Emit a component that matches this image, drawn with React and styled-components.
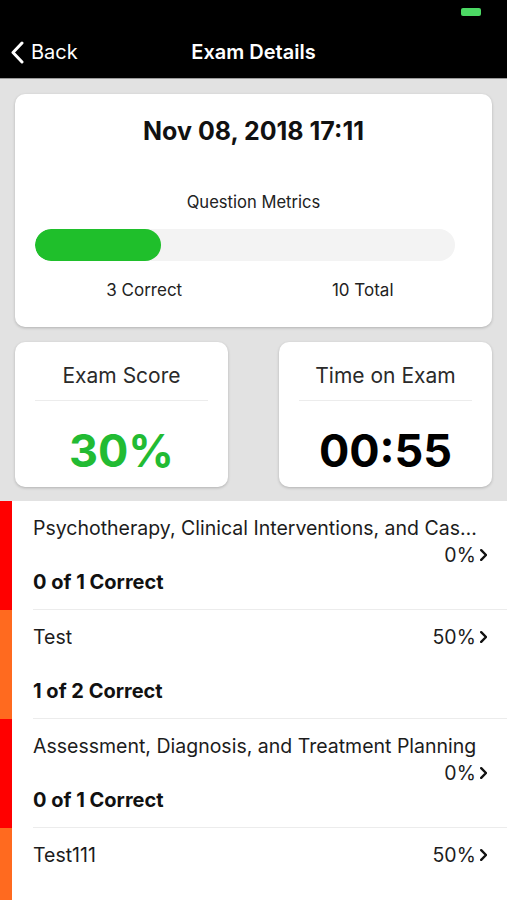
import React from 'react';
import styled, { createGlobalStyle } from 'styled-components';

const GlobalStyle = createGlobalStyle`
  body {
    margin: 0;
    background: #e2e2e2;
    font-family: Inter, "Liberation Sans", Arial, sans-serif;
    color: #1c1c1c;
  }
`;

const Screen = styled.div`
  width: 507px;
  height: 900px;
  overflow: hidden;
  background: #e2e2e2;
`;

const Header = styled.header`
  height: 78px;
  background: #000;
  border-bottom: 1px solid #9a9a9a;
  display: flex;
  flex-direction: column;
`;

const StatusBar = styled.div`
  height: 26px;
  display: flex;
  justify-content: flex-end;
  align-items: flex-start;
  padding: 8px 26px 0 0;
  box-sizing: border-box;
`;

const Battery = styled.div`
  width: 20px;
  height: 8px;
  border-radius: 2px;
  background: #4cd964;
`;

const NavBar = styled.div`
  flex: 1;
  display: grid;
  grid-template-columns: 1fr auto 1fr;
  align-items: center;
  padding: 0 10px 0;
`;

const BackButton = styled.div`
  display: flex;
  align-items: center;
  gap: 7px;
  color: #fff;
  font-size: 20px;
`;

const NavTitle = styled.div`
  color: #fff;
  font-size: 20px;
  font-weight: 600;
`;

const Content = styled.main`
  padding: 15px 15px 14px;
  display: flex;
  flex-direction: column;
  gap: 15px;
`;

const Card = styled.div`
  background: #fff;
  border-radius: 10px;
  box-shadow: 0 1px 3px rgba(0, 0, 0, 0.22);
`;

const MetricsCard = styled(Card)`
  padding: 22px 20px 27px;
  text-align: center;
`;

const DateTitle = styled.div`
  font-size: 25px;
  line-height: 30px;
  font-weight: 700;
  color: #111;
`;

const Caption = styled.div`
  margin-top: 46px;
  font-size: 16.6px;
  line-height: 20px;
  color: #222;
`;

const Track = styled.div`
  margin: 17px 17px 0 0;
  height: 32px;
  border-radius: 16px;
  background: #f3f3f3;
  overflow: hidden;
`;

const Fill = styled.div`
  height: 100%;
  border-radius: 16px;
  background: #1fbf2b;
`;

const Labels = styled.div`
  margin-top: 19px;
  display: grid;
  grid-template-columns: 1fr 1fr;
  font-size: 17px;
  line-height: 20px;
  color: #222;
`;

const StatRow = styled.div`
  display: grid;
  grid-template-columns: 213px 213px;
  justify-content: space-between;
`;

const StatCard = styled(Card)`
  padding: 22px 20px 10px;
  text-align: center;
`;

const StatLabel = styled.div`
  font-size: 21px;
  line-height: 24px;
  color: #2a2a2a;
  padding-bottom: 12px;
  border-bottom: 1px solid #ececec;
`;

const StatValue = styled.div`
  margin-top: 24px;
  font-size: 45px;
  line-height: 52px;
  font-weight: 700;
  color: ${p => p.color || '#000'};
`;

const List = styled.ul`
  list-style: none;
  margin: 0;
  padding: 0;
  background: #fff;
`;

const Row = styled.li`
  display: flex;
  background: #fff;
`;

const Strip = styled.div`
  width: 12px;
  flex-shrink: 0;
  background: ${p => p.color};
`;

const RowBody = styled.div`
  flex: 1;
  min-width: 0;
  margin-left: 21px;
  padding: 13.5px 20px 13.5px 0;
  border-bottom: 1px solid #ececec;
  font-size: 19.5px;
  line-height: 27px;
`;

const TopLine = styled.div`
  min-height: 54px;
  display: flex;
  flex-wrap: wrap;
  align-content: flex-start;
  color: #1c1c1c;
`;

const Topic = styled.span`
  max-width: 100%;
  white-space: nowrap;
  overflow: hidden;
  text-overflow: ellipsis;
`;

const Percent = styled.span`
  margin-left: auto;
  display: flex;
  align-items: center;
  gap: 4px;
  white-space: nowrap;
`;

const Correct = styled.div`
  font-size: 20px;
  font-weight: 700;
  color: #111;
`;

const Chevron = ({ size = 12, color = '#111', width = 2 }) => (
  <svg width={size * 0.6} height={size} viewBox="0 0 6 10" fill="none">
    <path d="M1 1l4 4-4 4" stroke={color} strokeWidth={width} strokeLinecap="round" strokeLinejoin="round" />
  </svg>
);

const BackChevron = () => (
  <svg width="14" height="23" viewBox="0 0 14 23" fill="none">
    <path d="M12 2L3 11.5 12 21" stroke="#fff" strokeWidth="3" strokeLinecap="round" strokeLinejoin="round" />
  </svg>
);

const topics = [
  { name: 'Psychotherapy, Clinical Interventions, and Case Management', pct: '0%', correct: '0 of 1 Correct', color: '#ff0000' },
  { name: 'Test', pct: '50%', correct: '1 of 2 Correct', color: '#ff6a1f' },
  { name: 'Assessment, Diagnosis, and Treatment Planning', pct: '0%', correct: '0 of 1 Correct', color: '#ff0000' },
  { name: 'Test111', pct: '50%', correct: '1 of 2 Correct', color: '#ff6a1f' },
];

export default function App() {
  return (
    <Screen>
      <GlobalStyle />
      <Header>
        <StatusBar>
          <Battery />
        </StatusBar>
        <NavBar>
          <BackButton>
            <BackChevron />
            Back
          </BackButton>
          <NavTitle>Exam Details</NavTitle>
          <div />
        </NavBar>
      </Header>

      <Content>
        <MetricsCard>
          <DateTitle>Nov 08, 2018 17:11</DateTitle>
          <Caption>Question Metrics</Caption>
          <Track>
            <Fill style={{ width: `${(3 / 10) * 100}%` }} />
          </Track>
          <Labels>
            <span>3 Correct</span>
            <span>10 Total</span>
          </Labels>
        </MetricsCard>

        <StatRow>
          <StatCard>
            <StatLabel>Exam Score</StatLabel>
            <StatValue color="#22bb33">30%</StatValue>
          </StatCard>
          <StatCard>
            <StatLabel>Time on Exam</StatLabel>
            <StatValue>00:55</StatValue>
          </StatCard>
        </StatRow>
      </Content>

      <List>
        {topics.map(t => (
          <Row key={t.name}>
            <Strip color={t.color} />
            <RowBody>
              <TopLine>
                <Topic>{t.name}</Topic>
                <Percent>
                  {t.pct}
                  <Chevron />
                </Percent>
              </TopLine>
              <Correct>{t.correct}</Correct>
            </RowBody>
          </Row>
        ))}
      </List>
    </Screen>
  );
}
